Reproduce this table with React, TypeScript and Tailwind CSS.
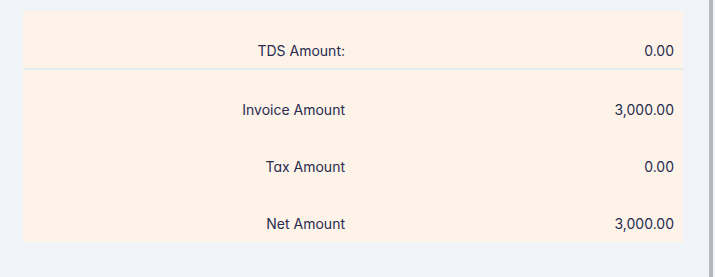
import React from 'react';

const rows = [
  { label: 'Invoice Amount', value: '3,000.00' },
  { label: 'Tax Amount', value: '0.00' },
  { label: 'Net Amount', value: '3,000.00' },
];

function Row({ label, value }: { label: string; value: string }) {
  return (
    <div className="grid grid-cols-2 h-[57px] items-end pb-[7px]">
      <div className="px-2 text-right leading-5 h-5">{label}</div>
      <div className="px-[9px] text-right leading-5 h-5">{value}</div>
    </div>
  );
}

export default function App() {
  return (
    <div
      className="w-[715px] h-[277px] bg-[#f0f3f8] flex text-sm text-[#2b2c4f] [font-feature-settings:'cv11']"
      style={{ fontFamily: 'Inter, "Noto Sans", sans-serif' }}
    >
      <div className="flex-1 pl-[23px] pr-[26px] pt-[11px]">
        <div className="bg-[#fdf3e9]">
          <Row label="TDS Amount:" value="0.00" />
        </div>
        <div className="h-[2px] bg-[#e4eaf0]" />
        <div className="bg-[#fdf3e9] pb-px">
          {rows.map(r => (
            <Row key={r.label} label={r.label} value={r.value} />
          ))}
        </div>
      </div>
      {/* scrollbar edge */}
      <div className="w-[4px] bg-[#b5b9bd]" />
      <div className="w-[2px]" />
    </div>
  );
}
